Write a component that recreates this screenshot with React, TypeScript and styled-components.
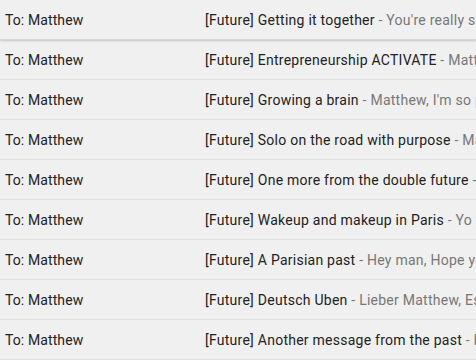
import { FC } from "react";
import styled, { createGlobalStyle } from "styled-components";

type Mail = {
  to: string;
  subject: string;
  snippet: string;
};

const mails: Mail[] = [
  { to: "Matthew", subject: "Getting it together", snippet: "You're really supposed to be" },
  { to: "Matthew", subject: "Entrepreneurship ACTIVATE", snippet: "Matthew, what's up" },
  { to: "Matthew", subject: "Growing a brain", snippet: "Matthew, I'm so proud of you" },
  { to: "Matthew", subject: "Solo on the road with purpose", snippet: "Matthew" },
  { to: "Matthew", subject: "One more from the double future", snippet: "Hey" },
  { to: "Matthew", subject: "Wakeup and makeup in Paris", snippet: "Yo yo yo" },
  { to: "Matthew", subject: "A Parisian past", snippet: "Hey man, Hope you're well" },
  { to: "Matthew", subject: "Deutsch Uben", snippet: "Lieber Matthew, Es ist" },
  { to: "Matthew", subject: "Another message from the past", snippet: "Hey" },
];

const GlobalStyle = createGlobalStyle`
  body {
    margin: 0;
    background: #f0f0f0;
    font-family: Roboto, "Liberation Sans", sans-serif;
    overflow: hidden;
  }
`;

const App: FC = () => {
  return (
    <>
      <GlobalStyle />
      <_List>
        {mails.map((mail, i) => (
          <_Row key={i} hovered={i === 0}>
            <_To>To: {mail.to}</_To>
            <_Line>
              <_Subject>[Future] {mail.subject}</_Subject>
              <_Snippet> - {mail.snippet}</_Snippet>
            </_Line>
          </_Row>
        ))}
      </_List>
    </>
  );
};

export default App;

const _List = styled.div`
  display: flex;
  flex-direction: column;
  width: 476px;
`;

const _Row = styled.div<{ hovered: boolean }>`
  position: relative;
  z-index: ${({ hovered }) => (hovered ? 1 : 0)};
  display: flex;
  align-items: center;
  height: 40px;
  box-sizing: border-box;
  padding-left: 5px;
  background: #f0f0f0;
  border-bottom: 1px solid ${({ hovered }) => (hovered ? "#d6d6d6" : "#e2e2e2")};
  box-shadow: ${({ hovered }) =>
    hovered ? "0 1px 2px 0 rgba(60, 64, 67, 0.25)" : "none"};
  font-size: 14px;
  white-space: nowrap;
  overflow: hidden;
`;

const _To = styled.div`
  width: 200px;
  flex-shrink: 0;
  color: #222;
  letter-spacing: 0.1px;
`;

const _Line = styled.div`
  flex: 1;
  overflow: hidden;
  text-overflow: clip;
  letter-spacing: 0.25px;
`;

const _Subject = styled.span`
  color: #222;
`;

const _Snippet = styled.span`
  color: #777;
`;
